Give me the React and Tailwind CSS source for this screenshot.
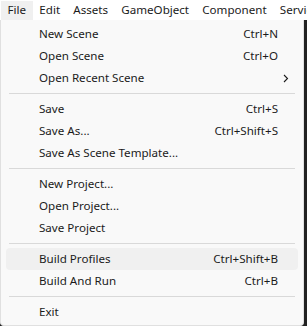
import React from "react";

const menuBar = ["File", "Edit", "Assets", "GameObject", "Component", "Services"];

const groups = [
  [
    { label: "New Scene", shortcut: "Ctrl+N" },
    { label: "Open Scene", shortcut: "Ctrl+O" },
    { label: "Open Recent Scene", submenu: true },
  ],
  [
    { label: "Save", shortcut: "Ctrl+S" },
    { label: "Save As...", shortcut: "Ctrl+Shift+S" },
    { label: "Save As Scene Template..." },
  ],
  [
    { label: "New Project..." },
    { label: "Open Project..." },
    { label: "Save Project" },
  ],
  [
    { label: "Build Profiles", shortcut: "Ctrl+Shift+B", active: true },
    { label: "Build And Run", shortcut: "Ctrl+B" },
  ],
  [{ label: "Exit" }],
];

const App = () => {
  return (
    <div
      className="w-[307px] h-[326px] bg-[#222222] overflow-hidden text-[11.6px] text-[#1b1b1b]"
      style={{ fontFamily: '"Noto Sans", "Open Sans", sans-serif' }}
    >
      {/* Menu bar */}
      <div className="h-[20px] bg-white flex items-center whitespace-nowrap overflow-hidden pl-[1px]">
        {menuBar.map((name, i) => (
          <div
            key={name}
            className={`h-[19px] shrink-0 flex items-center px-[6.6px] ${
              i === 0 ? "bg-[#f0f0f0]" : ""
            }`}
          >
            {name}
          </div>
        ))}
      </div>

      {/* Dropdown */}
      <div className="w-[304px] h-[306px] bg-[#f9f9f9] border-l border-r border-b border-[#e0e0e0] rounded-b-[4px] pt-[3px] px-[5px]">
        {groups.map((group, gi) => (
          <div key={gi}>
            {gi > 0 && (
              <div className="h-[9px] flex items-center px-[3px]">
                <div className="h-px w-full bg-[#d9d9d9]" />
              </div>
            )}
            {group.map((item) => (
              <div
                key={item.label}
                className={`h-[22px] flex items-center pl-[33px] pr-[20px] rounded-[4px] ${
                  item.active ? "bg-[#f0f0f0]" : ""
                }`}
              >
                <span className="flex-1">{item.label}</span>
                {item.shortcut && <span>{item.shortcut}</span>}
                {item.submenu && (
                  <svg
                    width="6"
                    height="9"
                    viewBox="0 0 6 9"
                    className="-mr-[11px]"
                  >
                    <path
                      d="M1 1 L4.5 4.5 L1 8"
                      fill="none"
                      stroke="#1b1b1b"
                      strokeWidth="1.1"
                    />
                  </svg>
                )}
              </div>
            ))}
          </div>
        ))}
      </div>
    </div>
  );
};

export default App;
